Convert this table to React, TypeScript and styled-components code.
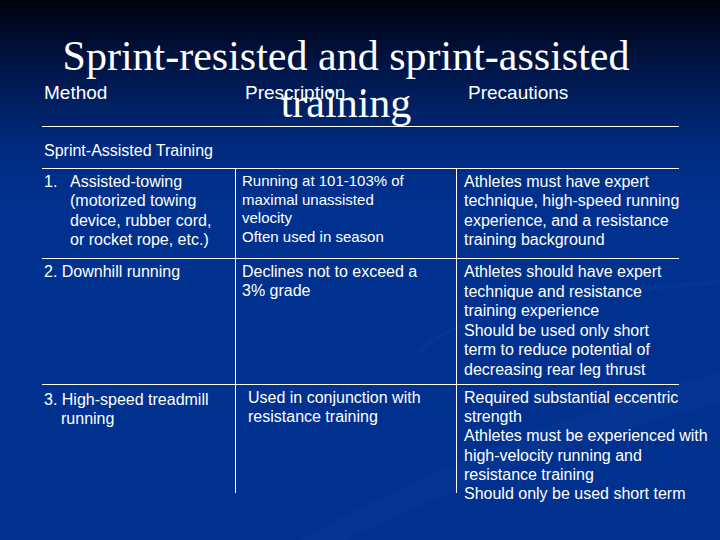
import React from "react";
import styled, { createGlobalStyle } from "styled-components";

const GlobalStyle = createGlobalStyle`
  html, body { margin: 0; padding: 0; }
  body { background: #00318f; }
`;

const Slide = styled.div`
  position: relative;
  width: 720px;
  height: 540px;
  overflow: hidden;
  background: linear-gradient(
    to bottom,
    #00030e 0px,
    #000b28 30px,
    #00164a 70px,
    #002266 110px,
    #002b80 150px,
    #00318f 200px,
    #00318f 540px
  );
  font-family: "Liberation Sans", Arial, sans-serif;
  color: #ffffff;
`;

const Swoosh = styled.svg`
  position: absolute;
  left: 0;
  top: 0;
  width: 720px;
  height: 540px;
  pointer-events: none;
`;

const Title = styled.h1`
  position: relative;
  z-index: 1;
  margin: 0 28px -45px 0;
  padding-top: 33px;
  font-family: "Liberation Serif", "Times New Roman", serif;
  font-weight: normal;
  font-size: 42px;
  line-height: 47px;
  text-align: center;
`;

const Table = styled.div`
  position: relative;
  margin-left: 42px;
  width: 637px;
`;

const HeaderRow = styled.div`
  display: grid;
  grid-template-columns: 193px 221px 223px;
  height: 44px;
  border-bottom: 1px solid #ffffff;
  font-size: 19px;
  line-height: 22px;
`;

const HeaderCell = styled.div<{ $pad: number }>`
  padding-left: ${(p) => p.$pad}px;
  white-space: nowrap;
`;

const Dot = styled.span`
  display: inline-block;
  width: 4px;
  height: 4px;
  border-radius: 50%;
  background: #ffffff;
  margin-left: 16px;
  vertical-align: 4px;
`;

const SectionRow = styled.div`
  box-sizing: border-box;
  height: 42px;
  padding: 14px 0 0 2px;
  border-bottom: 1px solid #ffffff;
  font-size: 16px;
  line-height: 19.5px;
`;

const Row = styled.div<{ $h: number; $last?: boolean }>`
  box-sizing: border-box;
  display: grid;
  grid-template-columns: 193px 221px 223px;
  grid-template-rows: minmax(0, 1fr);
  height: ${(p) => p.$h}px;
  border-bottom: ${(p) => (p.$last ? "none" : "1px solid #ffffff")};
`;

const Cell = styled.div<{
  $pl: number;
  $pt?: number;
  $divider?: boolean;
  $fs?: number;
  $lh?: number;
}>`
  box-sizing: border-box;
  min-height: 0;
  padding-left: ${(p) => p.$pl}px;
  padding-top: ${(p) => p.$pt ?? 3}px;
  border-left: ${(p) => (p.$divider ? "1px solid #ffffff" : "none")};
  font-size: ${(p) => p.$fs ?? 16}px;
  line-height: ${(p) => p.$lh ?? 19.4}px;
  white-space: nowrap;
  overflow: visible;
`;

const Line = styled.div<{ $indent?: number }>`
  padding-left: ${(p) => p.$indent ?? 0}px;
  white-space: nowrap;
`;

const Numbered = styled.div`
  display: flex;
`;

const Num = styled.span`
  width: 26px;
  flex: none;
`;

const Lines: React.FC<{ lines: string[] }> = ({ lines }) => (
  <>
    {lines.map((l, i) => (
      <Line key={i}>{l}</Line>
    ))}
  </>
);

export default function App() {
  return (
    <>
      <GlobalStyle />
      <Slide>
        <Swoosh viewBox="0 0 720 540">
          <path
            d="M300 540 Q 500 430 720 372 L 720 402 Q 520 455 345 540 Z"
            fill="rgba(140,170,255,0.035)"
          />
          <path
            d="M418 352 Q 470 300 720 282"
            stroke="rgba(140,170,255,0.035)"
            strokeWidth="5"
            fill="none"
          />
        </Swoosh>
        <Title>
          Sprint-resisted and sprint-assisted
          <br />
          training
        </Title>
        <Table>
          <HeaderRow>
            <HeaderCell $pad={2}>Method</HeaderCell>
            <HeaderCell $pad={10}>
              Prescription
              <Dot />
            </HeaderCell>
            <HeaderCell $pad={12}>Precautions</HeaderCell>
          </HeaderRow>
          <SectionRow>Sprint-Assisted Training</SectionRow>
          <Row $h={90}>
            <Cell $pl={2}>
              <Numbered>
                <Num>1.</Num>
                <div>
                  <Lines
                    lines={[
                      "Assisted-towing",
                      "(motorized towing",
                      "device, rubber cord,",
                      "or rocket rope, etc.)",
                    ]}
                  />
                </div>
              </Numbered>
            </Cell>
            <Cell $pl={6} $divider $fs={15} $lh={18.7} $pt={3}>
              <Lines
                lines={[
                  "Running at 101-103% of",
                  "maximal unassisted",
                  "velocity",
                  "Often used in season",
                ]}
              />
            </Cell>
            <Cell $pl={7} $divider>
              <Lines
                lines={[
                  "Athletes must have expert",
                  "technique, high-speed running",
                  "experience, and a resistance",
                  "training background",
                ]}
              />
            </Cell>
          </Row>
          <Row $h={126}>
            <Cell $pl={2}>
              <Line>2. Downhill running</Line>
            </Cell>
            <Cell $pl={6} $divider>
              <Lines lines={["Declines not to exceed a", "3% grade"]} />
            </Cell>
            <Cell $pl={7} $divider $lh={19.6}>
              <Lines
                lines={[
                  "Athletes should have expert",
                  "technique and resistance",
                  "training experience",
                  "Should be used only short",
                  "term to reduce potential of",
                  "decreasing rear leg thrust",
                ]}
              />
            </Cell>
          </Row>
          <Row $h={108} $last>
            <Cell $pl={2} $pt={5}>
              <Line>3. High-speed treadmill</Line>
              <Line $indent={17}>running</Line>
            </Cell>
            <Cell $pl={12} $divider>
              <Lines
                lines={["Used in conjunction with", "resistance training"]}
              />
            </Cell>
            <Cell $pl={7} $divider $lh={19.2}>
              <Lines
                lines={[
                  "Required substantial eccentric",
                  "strength",
                  "Athletes must be experienced with",
                  "high-velocity running and",
                  "resistance training",
                  "Should only be used short term",
                ]}
              />
            </Cell>
          </Row>
        </Table>
      </Slide>
    </>
  );
}
